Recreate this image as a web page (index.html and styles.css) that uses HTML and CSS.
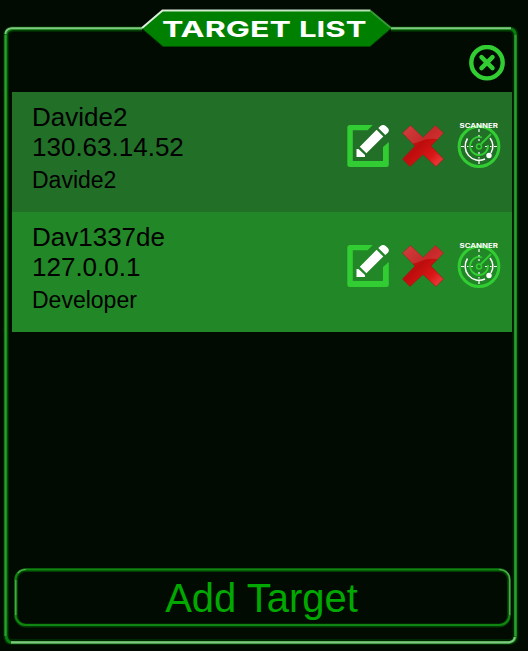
FILE: index.html
```html
<!DOCTYPE html>
<html lang="en">
<head>
<meta charset="utf-8">
<title>Target List</title>
<link rel="stylesheet" href="styles.css">
</head>
<body>
<svg class="defs" width="0" height="0" aria-hidden="true">
  <defs>
    <linearGradient id="redTop" x1="0" y1="0" x2="1" y2="1">
      <stop offset="0" stop-color="#cc2525"/><stop offset=".45" stop-color="#bd0c0c"/><stop offset=".72" stop-color="#d81616"/><stop offset="1" stop-color="#f64848"/>
    </linearGradient>
    <clipPath id="crossClip"><path d="M8.500.5 21 12.500 33.500.5 41.500 8 29 21 41.500 34 34 41.500 21 29.500 8 41.500.5 34 13 21 .5 8Z"/></clipPath>
    <symbol id="edit" viewBox="0 0 42 42">
      <path fill="#32cd32" d="M3 0H25.800L20.500 5.300H5.800V36H36V22L41.800 17V39.500Q41.800 42 39.500 42H3Q.3 42 .3 39.500V2.500Q.3 0 3 0Z"/>
      <path fill="#fff" d="M9.500 24H11.500L18 30V32H9.500ZM12.800 21.700 29.600 4.800 36.300 11.500 19.400 28.300ZM31.300 3 33.500 1Q36-1 38.800 1L41 3.300Q42.800 5.500 40.800 7.700L38.300 10Z"/>
    </symbol>
    <symbol id="cross" viewBox="0 0 42 42">
      <path fill="url(#redTop)" stroke="#991a1a" stroke-width=".6" d="M8.500.5 21 12.500 33.500.5 41.500 8 29 21 41.500 34 34 41.500 21 29.500 8 41.500.5 34 13 21 .5 8Z"/>
      <path clip-path="url(#crossClip)" fill="#fff" opacity=".12" d="M0 0H42V15Q28 12 19 16T0 20Z"/>
    </symbol>
    <symbol id="scanner" viewBox="0 0 44 46">
      <g fill="none" stroke="#32cd32">
        <circle cx="22" cy="23.500" r="19.900" stroke-width="3"/>
        <path d="M25 14.500A9 9 0 1 0 31 22M24 21 34 11" stroke-width="1.800"/>
        <circle cx="22" cy="23.500" r="2.500" stroke-width="1.500"/>
      </g>
      <g fill="none" stroke="#fff" stroke-width="1.500">
        <path d="M10.500 15.500A14 14 0 0 0 28 36M33 15A14 14 0 0 1 34 30"/>
        <path stroke-width="1.200" d="M22 6V9M22 12V13.500M22 16V18M22 29V31M22 34V35.500M22 38V41M4 23.500H7M10 23.500H11.500M14 23.500H16M28 23.500H30M33 23.500H34.500M37 23.500H40"/>
      </g>
      <circle cx="32" cy="32.500" r="2.700" fill="#fff"/>
      <text class="scan-label" x="2.500" y="5.300" textLength="38.500" lengthAdjust="spacingAndGlyphs">SCANNER</text>
    </symbol>
  </defs>
</svg>
<main class="panel">
  <svg class="frame" viewBox="0 0 528 651" aria-hidden="true">
    <defs>
      <linearGradient id="edge" x1="0" x2="1"><stop offset="0" stop-color="#ddf0dd"/><stop offset="1" stop-color="#b5e0b5"/></linearGradient>
    </defs>
    <g fill="none">
      <path stroke="#003c00" stroke-width="6" opacity=".6" d="M142 29H12Q6 30 6 35V635Q6 642 12 642H510Q515.500 641 515.500 637V36Q515.500 29 509 29H391"/>
      <path stroke="#087d0d" stroke-width="3" d="M142 28.800H12Q6 30 6 35V636Q7 642.500 12 642.500H510Q515.500 641 515.500 636V36Q515.500 28.800 509 28.800H391"/>
      <path stroke="#329b32" stroke-width="2" d="M5.500 35V636M515.400 35V636"/>
      <path stroke="#83c583" stroke-width="2" d="M5.300 34Q6 28.200 12 28.200H142M391 28.200H511"/>
      <path stroke="#83c583" stroke-width="2.200" d="M11 642.300H509Q514.500 641.500 514.800 637"/>
    </g>
    <path fill="#008000" stroke="#004900" d="M142 28.500 162.500 10.500H370.500L391 28.500 370 46.500H163Z"/>
    <path fill="none" stroke="url(#edge)" stroke-width="2" d="M142 28 162.500 10.500H370.500"/>
    <path fill="none" stroke="#329b32" stroke-width="2" d="M370.500 11 391 28"/>
    <text class="title" y="36.700"><tspan x="162" textLength="129" lengthAdjust="spacingAndGlyphs">TARGET</tspan> <tspan x="299" textLength="67.500" lengthAdjust="spacingAndGlyphs">LIST</tspan></text>
  </svg>
  <header class="toolbar">
    <button class="close" aria-label="Close">
      <svg width="36" height="36" viewBox="0 0 36 36"><g fill="none" stroke="#32cd32"><circle cx="18" cy="17.700" r="15.700" stroke-width="4.400"/><path stroke-width="4.500" stroke-linecap="round" d="M12.500 12.200 23.500 23.200M23.500 12.200 12.500 23.200"/></g></svg>
    </button>
  </header>
  <ul class="list">
    <li class="row">
      <div class="info"><span>Davide2</span><span>130.63.14.52</span><span class="owner">Davide2</span></div>
      <div class="actions">
        <svg class="icon"><use href="#edit"/></svg>
        <svg class="icon"><use href="#cross"/></svg>
        <svg class="icon scan"><use href="#scanner"/></svg>
      </div>
    </li>
    <li class="row alt">
      <div class="info"><span>Dav1337de</span><span>127.0.0.1</span><span class="owner">Developer</span></div>
      <div class="actions">
        <svg class="icon"><use href="#edit"/></svg>
        <svg class="icon"><use href="#cross"/></svg>
        <svg class="icon scan"><use href="#scanner"/></svg>
      </div>
    </li>
  </ul>
  <button class="add">
    <svg class="add-frame" viewBox="0 0 498 60" aria-hidden="true">
      <g fill="none">
        <rect x="2" y="2" width="493" height="55.500" rx="10" stroke="#003c00" stroke-width="4"/>
        <rect x="1.500" y="1.500" width="494" height="55.500" rx="10" stroke="#118511" stroke-width="2"/>
        <path stroke="#5cab5c" stroke-width="1.200" d="M1.800 47V12M4 5Q7 1.500 12 1.500M485 1.500Q495.700 2 495.700 12V47"/>
      </g>
    </svg>
    <span class="add-label">Add Target</span>
  </button>
</main>
</body>
</html>
```
FILE: styles.css
```css
* { box-sizing: border-box; }
body {
  margin: 0;
  background: #020b02;
  font-family: "Liberation Sans", Arial, sans-serif;
  overflow: hidden;
}
button {
  border: 0;
  padding: 0;
  background: none;
  font-family: inherit;
}
.defs { position: absolute; }
.panel {
  position: relative;
  display: flex;
  flex-direction: column;
  width: 528px;
  height: 651px;
  padding: 44px 16px 23px 12px;
}
.frame {
  position: absolute;
  inset: 0;
  width: 528px;
  height: 651px;
  pointer-events: none;
}
.title {
  font: 700 22px Inter, "Liberation Sans", sans-serif;
  fill: #fff;
}
.scan-label {
  font: 700 6px Inter, "Liberation Sans", sans-serif;
  fill: #fff;
}
.toolbar {
  display: flex;
  justify-content: flex-end;
  height: 48px;
  padding: 1px 7px 0 0;
}
.close, .close svg { display: block; width: 36px; height: 36px; }
.list {
  list-style: none;
  margin: 0;
  padding: 0;
}
.row {
  display: flex;
  justify-content: space-between;
  height: 120px;
  padding: 10px 11px 0 20px;
  background: #226f28;
  color: #000;
}
.alt { background: #228726; }
.info {
  display: flex;
  flex-direction: column;
  font-size: 26px;
  line-height: 30px;
}
.owner {
  font-size: 23px;
  line-height: 36px;
}
.actions {
  display: flex;
  align-items: flex-start;
  gap: 13px;
  padding-top: 23px;
}
.icon {
  display: block;
  width: 42px;
  height: 42px;
  overflow: visible;
}
.scan {
  width: 44px;
  height: 46px;
  margin-top: -2px;
}
.add {
  position: relative;
  width: 498px;
  height: 60px;
  margin: auto 0 0 2px;
  color: #00a800;
  font-size: 40px;
  line-height: 60px;
}
.add-label { margin-right: 3px; }
.add-frame {
  position: absolute;
  inset: 0;
  width: 498px;
  height: 60px;
}
```
